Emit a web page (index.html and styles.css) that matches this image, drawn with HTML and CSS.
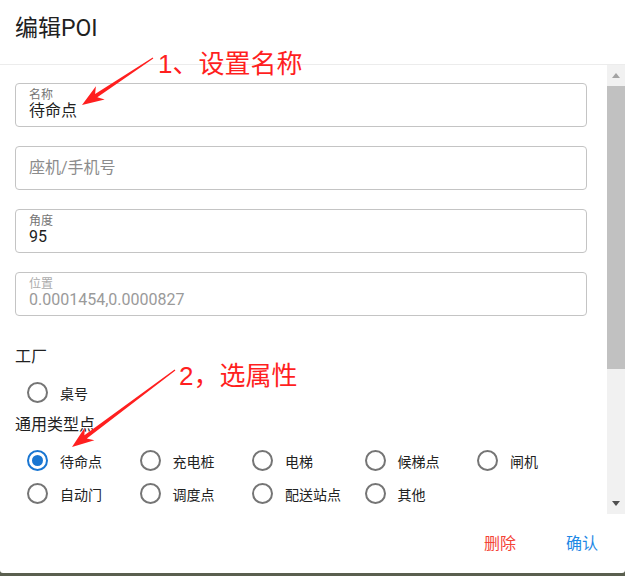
FILE: index.html
```html
<!DOCTYPE html>
<html lang="zh-CN">
<head>
    <meta charset="UTF-8">
    <title>编辑POI</title>
    <link rel="stylesheet" href="styles.css">
</head>
<body>
    <div class="dialog">
        <div class="dialog-title">编辑POI</div>

        <div class="dialog-body">
            <div class="form">
                <div class="field">
                    <span class="field-label">名称</span>
                    <span class="field-value">待命点</span>
                </div>
                <div class="field empty">
                    <span class="field-placeholder">座机/手机号</span>
                </div>
                <div class="field">
                    <span class="field-label">角度</span>
                    <span class="field-value">95</span>
                </div>
                <div class="field disabled">
                    <span class="field-label">位置</span>
                    <span class="field-value">0.0001454,0.0000827</span>
                </div>

                <div class="section-label first">工厂</div>
                <div class="radio-group">
                    <label class="radio"><span class="radio-dot"></span>桌号</label>
                </div>

                <div class="section-label">通用类型点</div>
                <div class="radio-group">
                    <label class="radio checked"><span class="radio-dot"></span>待命点</label>
                    <label class="radio"><span class="radio-dot"></span>充电桩</label>
                    <label class="radio"><span class="radio-dot"></span>电梯</label>
                    <label class="radio"><span class="radio-dot"></span>候梯点</label>
                    <label class="radio"><span class="radio-dot"></span>闸机</label>
                    <label class="radio"><span class="radio-dot"></span>自动门</label>
                    <label class="radio"><span class="radio-dot"></span>调度点</label>
                    <label class="radio"><span class="radio-dot"></span>配送站点</label>
                    <label class="radio"><span class="radio-dot"></span>其他</label>
                </div>
            </div>

            <div class="scrollbar">
                <div class="sb-btn"><span class="sb-arrow up"></span></div>
                <div class="sb-track"><div class="sb-thumb"></div></div>
                <div class="sb-btn"><span class="sb-arrow down"></span></div>
            </div>
        </div>

        <div class="dialog-actions">
            <button class="btn btn-danger">删除</button>
            <button class="btn btn-primary">确认</button>
        </div>

        <!-- annotations drawn over the screenshot -->
        <svg class="marks" width="625" height="573" viewBox="0 0 625 573">
            <polygon points="153.3,58.4 97.3,97.3 104.7,99.6 82,105 95.9,86.2 95.1,93.9 152.7,57.6" />
            <polygon points="175.4,370.5 86.8,438.4 94.4,440.2 72,447 84.8,427.4 84.4,435.2 174.6,369.5" />
        </svg>
        <div class="note note-1">1、设置名称</div>
        <div class="note note-2">2，选属性</div>
    </div>
</body>
</html>
```

FILE: styles.css
```css
body {
    margin: 0;
    width: 625px;
    height: 576px;
    background: #5a5f4f;
    font-family: Roboto, "Noto Sans CJK SC", sans-serif;
    color: #212121;
    overflow: hidden;
}
.dialog {
    position: relative;
    height: 573px;
    background: #fff;
    border-radius: 0 0 3px 3px;
    display: flex;
    flex-direction: column;
}
.dialog-title {
    box-sizing: border-box;
    height: 65px;
    padding: 17px 15px 0;
    font-size: 23px;
    line-height: 24px;
    border-bottom: 1px solid #ececec;
}
.dialog-body {
    height: 449px;
    display: flex;
}
.form {
    flex: 1;
    overflow: hidden;
    padding: 18px 20px 0 15px;
}
.field {
    box-sizing: border-box;
    height: 44px;
    margin-bottom: 19px;
    border: 1px solid #c4c4c4;
    border-radius: 4px;
    padding: 4px 13px 0;
    display: flex;
    flex-direction: column;
}
.field.empty {
    padding-top: 0;
    justify-content: center;
}
.field-label {
    font-size: 12px;
    line-height: 14px;
    color: #757575;
}
.field-value {
    font-size: 16px;
    line-height: 18px;
}
.field-placeholder {
    font-size: 16px;
    line-height: 20px;
    color: #8c8c8c;
}
.field.disabled .field-label {
    color: #ababab;
}
.field.disabled .field-value {
    color: #9a9a9a;
}
.section-label {
    font-size: 16px;
    line-height: 22px;
    margin-top: 5px;
}
.section-label.first {
    margin-top: 30px;
}
.radio-group {
    padding-top: 8px;
    display: grid;
    grid-template-columns: repeat(5, 112.5px);
}
.radio {
    height: 33px;
    display: flex;
    align-items: center;
    padding-left: 12px;
    font-size: 14px;
    color: #222;
}
.radio-dot {
    box-sizing: border-box;
    width: 21px;
    height: 21px;
    border: 2px solid #757575;
    border-radius: 50%;
    margin-right: 12px;
    display: flex;
    align-items: center;
    justify-content: center;
}
.radio.checked .radio-dot {
    border-color: #1976d2;
}
.radio.checked .radio-dot::after {
    content: "";
    width: 11px;
    height: 11px;
    border-radius: 50%;
    background: #1976d2;
}
.scrollbar {
    width: 18px;
    background: #f1f1f1;
    display: flex;
    flex-direction: column;
}
.sb-btn {
    height: 21px;
    display: flex;
    align-items: center;
    justify-content: center;
}
.sb-arrow {
    width: 0;
    height: 0;
    border-left: 4.5px solid transparent;
    border-right: 4.5px solid transparent;
}
.sb-arrow.up {
    border-bottom: 5px solid #a3a3a3;
}
.sb-arrow.down {
    border-top: 5px solid #505050;
}
.sb-track {
    flex: 1;
}
.sb-thumb {
    height: 283px;
    background: #c1c1c1;
}
.dialog-actions {
    flex: 1;
    display: flex;
    justify-content: flex-end;
    align-items: center;
    gap: 18px;
    padding-right: 11px;
}
.btn {
    background: none;
    border: 0;
    padding: 0 16px;
    font-family: inherit;
    font-size: 16px;
    line-height: 20px;
}
.btn-danger {
    color: #f44336;
}
.btn-primary {
    color: #1e88e5;
}
.marks {
    position: absolute;
    left: 0;
    top: 0;
    fill: #ff1f1f;
}
.note {
    position: absolute;
    font-family: "Liberation Sans", "Noto Sans CJK SC", sans-serif;
    font-size: 26px;
    line-height: 26px;
    color: #ff1f1f;
}
.note-1 {
    left: 158px;
    top: 51px;
}
.note-2 {
    left: 179px;
    top: 363px;
}
```
